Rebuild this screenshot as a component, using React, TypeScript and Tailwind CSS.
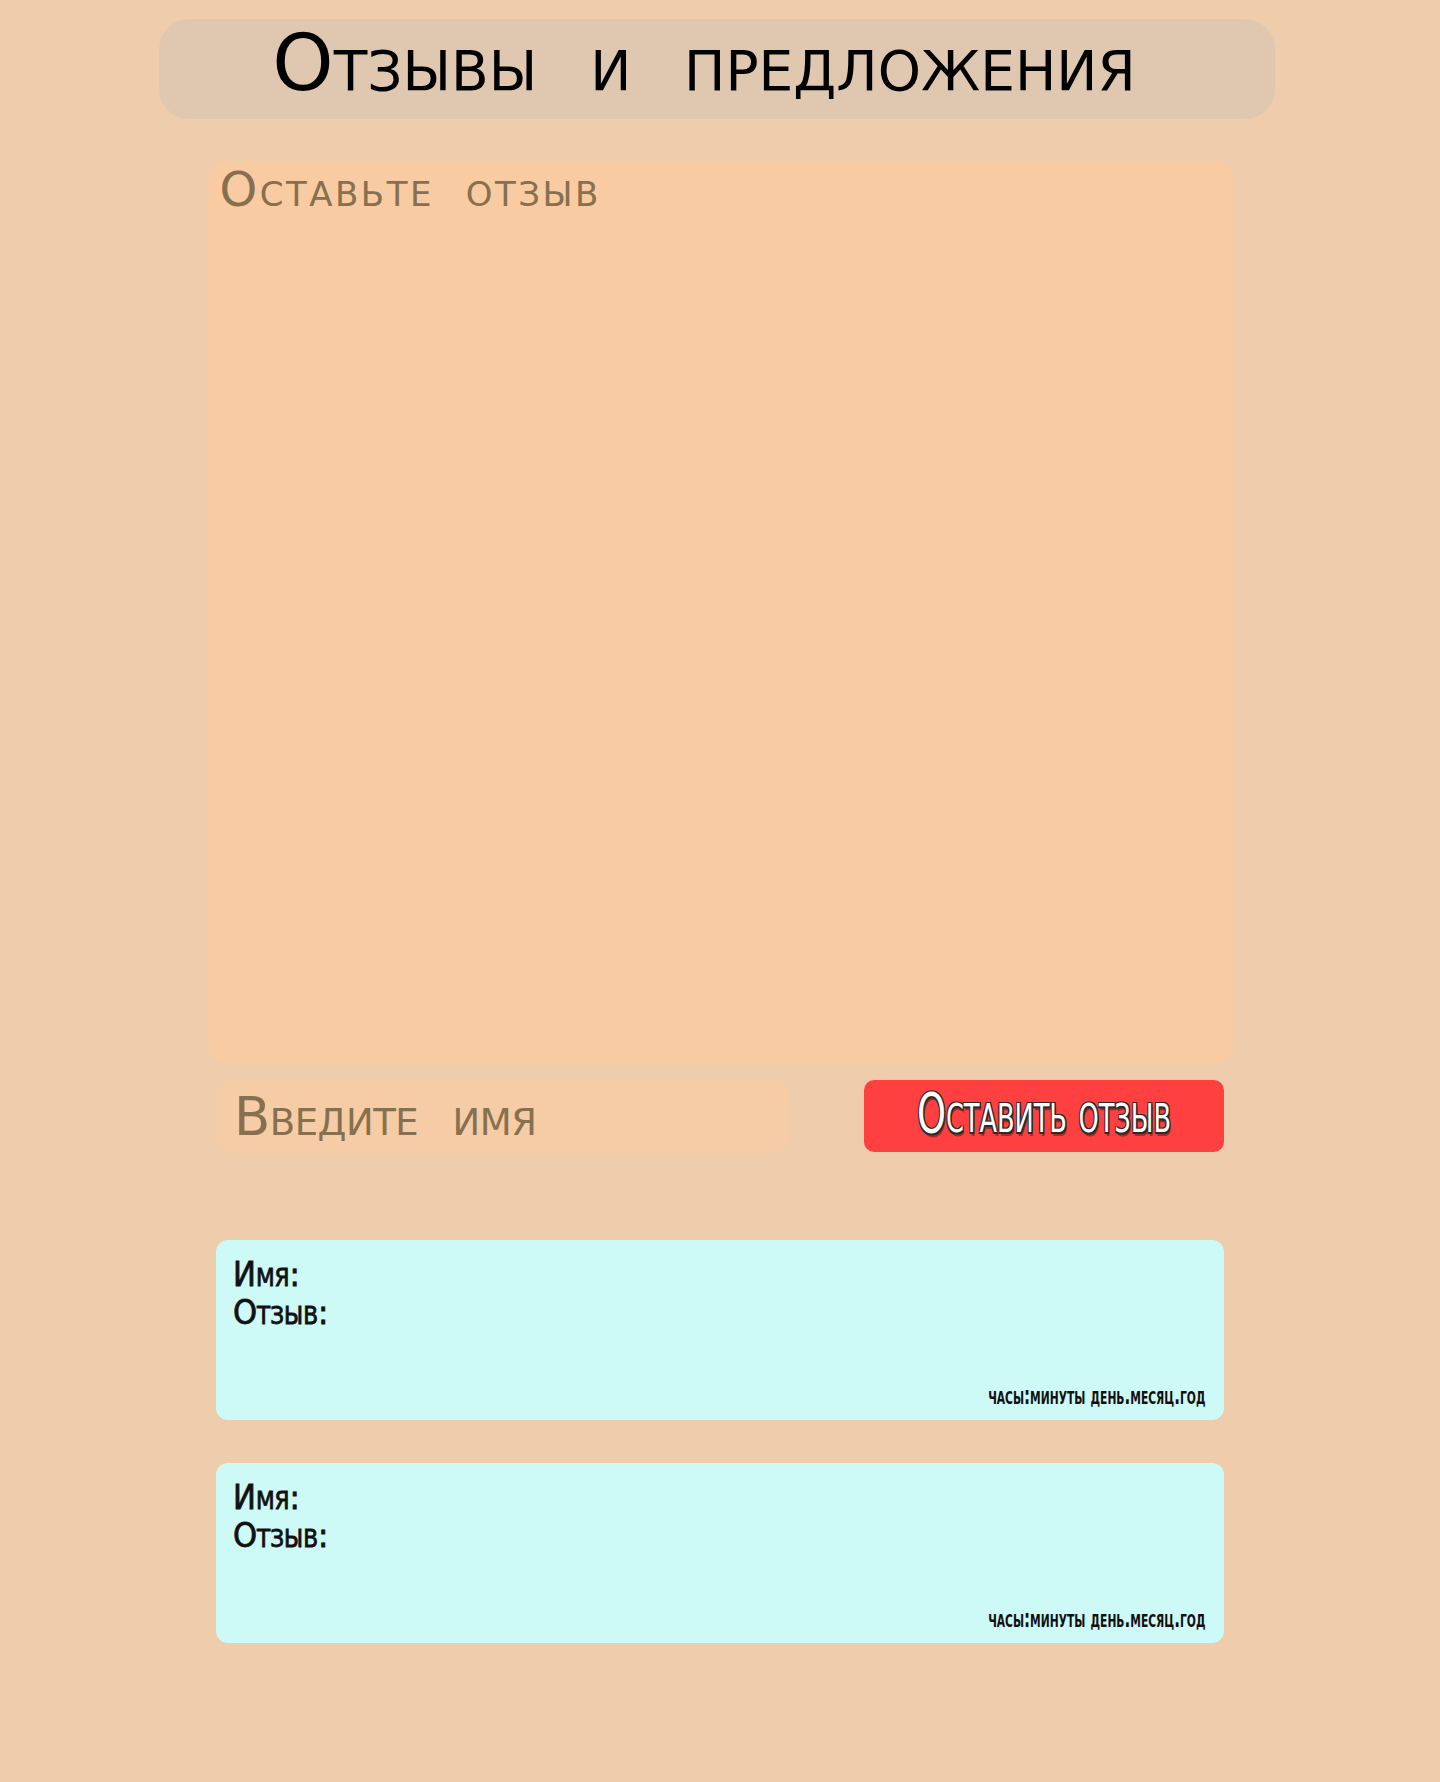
import { useState } from "react";

const reviews = [
  { id: 1, name: "", text: "", time: "часы:минуты день.месяц.год" },
  { id: 2, name: "", text: "", time: "часы:минуты день.месяц.год" },
];

const narrow = "font-['DejaVu_Sans_Condensed','DejaVu_Sans',sans-serif]";
const dejavu = "font-['DejaVu_Sans',sans-serif]";

const App = () => {
  const [name, setName] = useState("");
  const [text, setText] = useState("");

  return (
    <div className="min-h-[1782px] w-full bg-[#efcdac] flex flex-col items-center">
      <header className="mt-[19px] mr-[6px] w-[1116px] h-[100px] rounded-[30px] bg-[#e0c8b0] flex items-center justify-center pb-[12px] pr-[26px]">
        <h1
          className={`${dejavu} text-[78px] leading-none text-black [font-variant-caps:small-caps] [word-spacing:28px]`}
        >
          Отзывы и предложения
        </h1>
      </header>

      <textarea
        value={text}
        onChange={(e) => setText(e.target.value)}
        placeholder="Оставьте отзыв"
        className={`${dejavu} mt-[42px] w-[1025px] h-[902px] resize-none rounded-[18px] bg-[#f8cba3] px-[12px] pt-0 text-[48px] leading-[56px] tracking-[2.5px] [word-spacing:14px] text-[#86704f] placeholder:text-[#86704f] [font-variant-caps:small-caps] outline-none`}
      />

      <div className="mt-[17px] w-[1008px] flex justify-between items-start">
        <input
          value={name}
          onChange={(e) => setName(e.target.value)}
          placeholder="Введите имя"
          className={`${dejavu} w-[573px] h-[73px] rounded-[16px] bg-[#f6cca6] px-[18px] text-[53px] tracking-[-0.5px] [word-spacing:18px] text-[#86704f] placeholder:text-[#86704f] [font-variant-caps:small-caps] outline-none`}
        />
        <button
          className={`${narrow} w-[360px] h-[72px] rounded-[10px] bg-[#ff4040] text-white text-[56px] leading-none pb-[6px] [font-variant-caps:small-caps]`}
        >
          <span className="inline-block scale-x-[0.73] [text-shadow:-1.5px_-1.5px_0_#2a2a2a,1.5px_-1.5px_0_#2a2a2a,-1.5px_1.5px_0_#2a2a2a,1.5px_1.5px_0_#2a2a2a,2px_4px_0_#a32b2b]">
            Оставить отзыв
          </span>
        </button>
      </div>

      <div className="mt-[87px] flex flex-col gap-[43px]">
        {reviews.map((r) => (
          <div
            key={r.id}
            className={`${narrow} w-[1008px] h-[180px] rounded-[12px] bg-[#cdfaf6] flex flex-col px-[17px] pt-[15px] pb-[12px] text-[#111]`}
          >
            <div className="text-[34px] leading-[38px] [-webkit-text-stroke:0.8px_#111] [font-variant-caps:small-caps]">
              Имя: {r.name}
            </div>
            <div className="text-[34px] leading-[38px] [-webkit-text-stroke:0.8px_#111] [font-variant-caps:small-caps]">
              Отзыв: {r.text}
            </div>
            <div className="mt-auto self-end pr-[2px] text-[24px] leading-none font-bold [font-variant-caps:small-caps]">
              <span className="inline-block origin-right scale-x-[0.7]">{r.time}</span>
            </div>
          </div>
        ))}
      </div>
    </div>
  );
};

export default App;
